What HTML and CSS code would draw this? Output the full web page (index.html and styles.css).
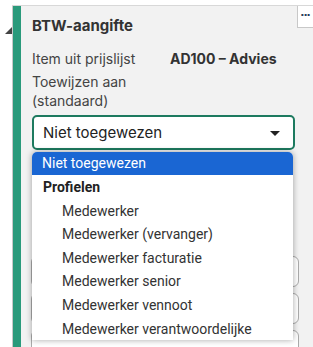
FILE: index.html
```html
<!DOCTYPE html>
<html>
<head>
<meta charset="utf-8">
<link rel="stylesheet" href="styles.css">
</head>
<body>
<div class="page">
  <div class="gutter"><span class="twisty"></span></div>
  <section class="panel">
    <div class="bar"></div>
    <div class="content">
      <h2 class="title">BTW-aangifte</h2>
      <div class="row">
        <span class="label">Item uit prijslijst</span>
        <span class="value">AD100 – Advies</span>
      </div>
      <div class="row two"><span class="label">Toewijzen aan<br>(standaard)</span></div>
      <div class="select-wrap">
        <div class="select">
          <span>Niet toegewezen</span>
          <span class="caret"></span>
        </div>
        <div class="spacer"></div>
        <div class="field"></div>
        <div class="field"></div>
        <div class="field"></div>
        <ul class="menu">
          <li class="opt selected">Niet toegewezen</li>
          <li class="group">Profielen</li>
          <li class="opt sub">Medewerker</li>
          <li class="opt sub">Medewerker (vervanger)</li>
          <li class="opt sub">Medewerker facturatie</li>
          <li class="opt sub">Medewerker senior</li>
          <li class="opt sub">Medewerker vennoot</li>
          <li class="opt sub">Medewerker verantwoordelijke</li>
        </ul>
      </div>
    </div>
    <button class="more">...</button>
  </section>
</div>
</body>
</html>
```
FILE: styles.css
```css
html, body { margin: 0; padding: 0; background: #fff; }
body { font-family: "Inter", "Noto Sans", sans-serif; color: #333; width: 313px; height: 347px; overflow: hidden; }
.page { display: flex; padding-top: 5px; }
.gutter { width: 12px; flex: none; position: relative; }
.twisty { position: absolute; left: 5px; top: 22px; width: 0; height: 0; border-left: 7px solid transparent; border-bottom: 7px solid #444; }
.panel { flex: 1; display: flex; background: #f2f2f2; border-top: 1px solid #d8d8d8; position: relative; height: 400px; }
.bar { width: 8px; flex: none; background: #2a9a7b; border-left: 1px solid #c8c8c8; }
.content { flex: 1; padding: 10px 0 0 11px; }
.title { margin: 0 0 13px; font-size: 15px; font-weight: 700; color: #333; line-height: 20px; }
.row { display: flex; font-size: 14px; line-height: 20px; color: #444; margin-bottom: 3px; }
.row.two { line-height: 19px; }
.label { width: 138px; }
.value { font-weight: 700; color: #333; }
.select-wrap { position: relative; margin-top: 5px; width: 263px; }
.select { box-sizing: border-box; height: 35px; border: 2px solid #1d7a5f; border-radius: 5px; background: #fff; display: flex; align-items: center; justify-content: space-between; padding: 0 13px 0 9px; font-size: 15px; color: #222; }
.caret { width: 0; height: 0; border-left: 5px solid transparent; border-right: 5px solid transparent; border-top: 5px solid #222; margin-top: 2px; }
.spacer { height: 106px; }
.field { box-sizing: border-box; height: 31px; width: 268px; margin-left: -1px; margin-bottom: 6px; border: 1px solid #aaa; border-radius: 6px; background: #fff; }
.menu { position: absolute; left: 0; top: 37px; width: 261px; margin: 0; padding: 0; list-style: none; background: #fff; border-radius: 5px 5px 0 0; box-shadow: 0 0 6px rgba(0,0,0,0.35); font-family: "Roboto", "Inter", sans-serif; font-size: 14px; color: #333; }
.opt, .group { height: 23.6px; line-height: 24px; padding-left: 10px; }
.selected { height: 23px; line-height: 23px; background: #1a66d3; color: #fff; border-radius: 5px 5px 0 0; }
.group { font-weight: 700; color: #222; padding-left: 11px; }
.sub { padding-left: 30px; }
.more { position: absolute; right: 0; top: 0; width: 16px; height: 22px; border: none; border-left: 1px solid #c8c8c8; border-bottom: 1px solid #c8c8c8; background: #fff; font-family: "DejaVu Sans", sans-serif; font-size: 11px; font-weight: 700; letter-spacing: -1px; line-height: 10px; color: #2a3a5a; display: flex; justify-content: center; align-items: flex-start; padding: 2px 1px 0 0; }
```
